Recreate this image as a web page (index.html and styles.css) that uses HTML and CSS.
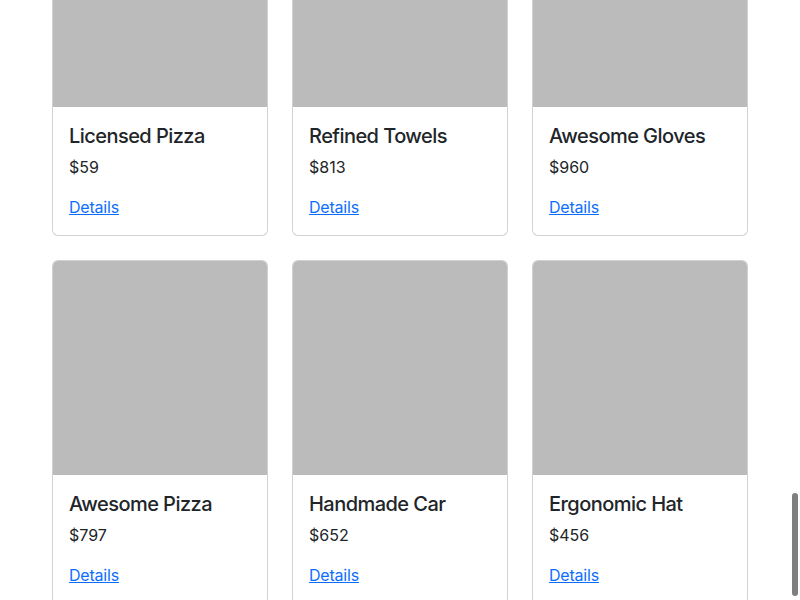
FILE: index.html
```html
<!DOCTYPE html>
<html lang="en">
<head>
<meta charset="utf-8">
<title>Products</title>
<link rel="stylesheet" href="styles.css">
</head>
<body>
<main class="container">
  <div class="grid">
    <div class="card"><div class="card-img"></div><div class="card-body"><h5 class="card-title">Licensed Pizza</h5><p class="card-text">$59</p><a href="#" class="card-link">Details</a></div></div>
    <div class="card"><div class="card-img"></div><div class="card-body"><h5 class="card-title">Refined Towels</h5><p class="card-text">$813</p><a href="#" class="card-link">Details</a></div></div>
    <div class="card"><div class="card-img"></div><div class="card-body"><h5 class="card-title">Awesome Gloves</h5><p class="card-text">$960</p><a href="#" class="card-link">Details</a></div></div>
    <div class="card"><div class="card-img"></div><div class="card-body"><h5 class="card-title">Awesome Pizza</h5><p class="card-text">$797</p><a href="#" class="card-link">Details</a></div></div>
    <div class="card"><div class="card-img"></div><div class="card-body"><h5 class="card-title">Handmade Car</h5><p class="card-text">$652</p><a href="#" class="card-link">Details</a></div></div>
    <div class="card"><div class="card-img"></div><div class="card-body"><h5 class="card-title">Ergonomic Hat</h5><p class="card-text">$456</p><a href="#" class="card-link">Details</a></div></div>
  </div>
</main>
<div class="scroll-thumb"></div>
</body>
</html>
```
FILE: styles.css
```css
html, body {
  margin: 0;
  height: 100%;
  overflow: hidden;
  background: #fff;
}
body {
  font-family: Inter, "Noto Sans", "Liberation Sans", sans-serif;
  color: #212529;
  font-size: 16px;
  line-height: 1.5;
}
.container {
  width: 696px;
  margin: -108px auto 0;
}
.grid {
  display: grid;
  grid-template-columns: repeat(3, 216px);
  column-gap: 24px;
  row-gap: 24px;
}
.card {
  border: 1px solid rgba(0, 0, 0, 0.175);
  border-radius: 6px;
  overflow: hidden;
  background: #fff;
}
.card-img {
  height: 214px;
  background: #bbbbbb;
}
.card-body {
  padding: 16px;
}
.card-title {
  margin: 0 0 6px;
  font-size: 20px;
  font-weight: 500;
  line-height: 26px;
  letter-spacing: -0.55px;
}
.card-text {
  margin: 0 0 16px;
}
.card-link {
  color: #0d6efd;
  text-decoration: underline;
  letter-spacing: -0.2px;
}
.scroll-thumb {
  position: fixed;
  right: 2px;
  top: 493px;
  width: 6px;
  height: 103px;
  border-radius: 3px;
  background: #7f7f7f;
}
```
